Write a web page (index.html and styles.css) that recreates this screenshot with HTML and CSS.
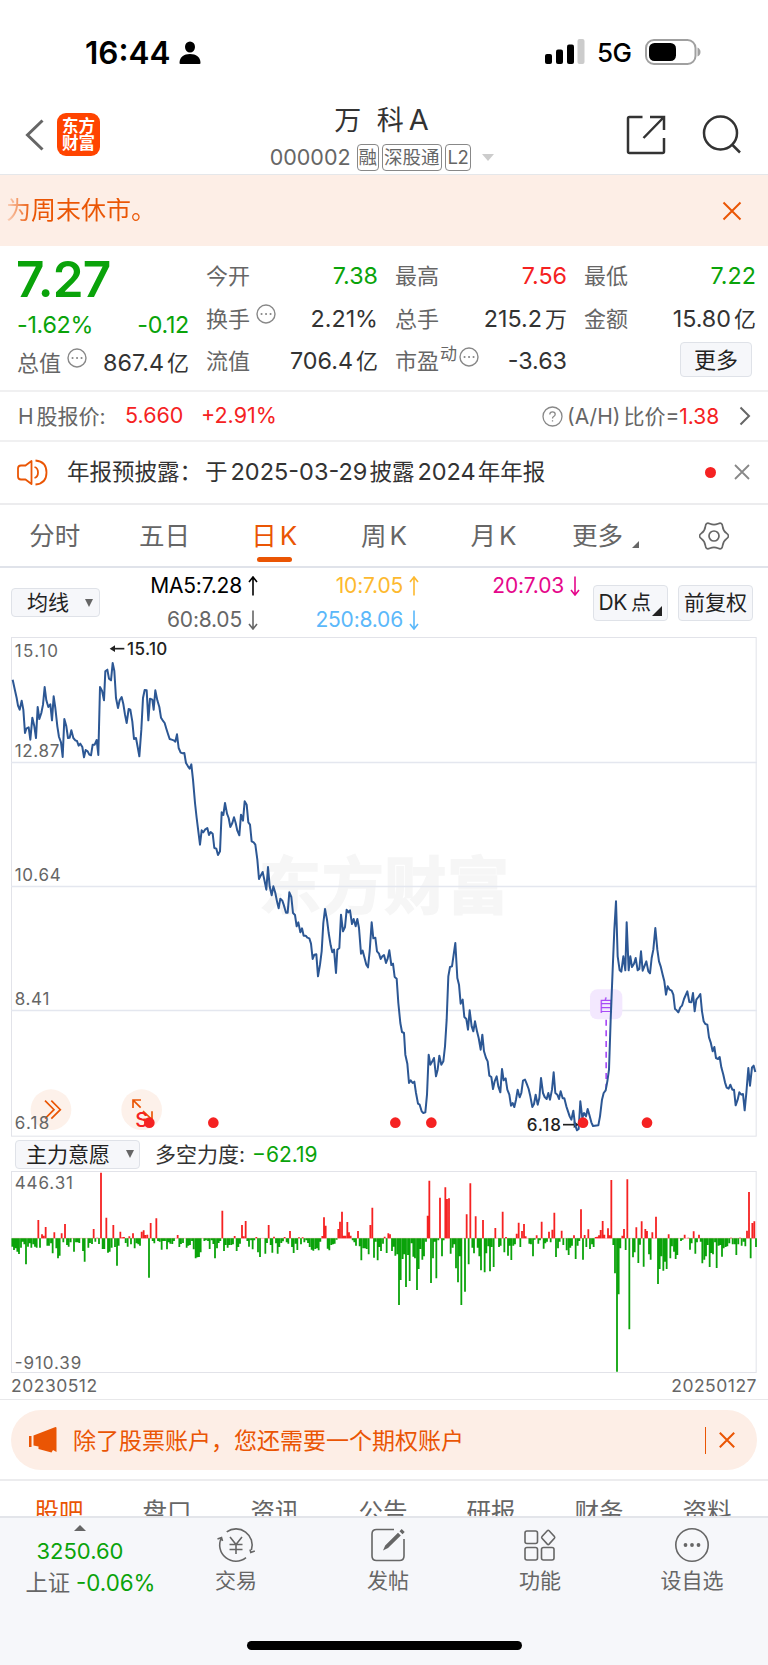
FILE: index.html
```html
<!DOCTYPE html>
<html lang="zh-CN">
<head>
  <meta charset="UTF-8" />
  <meta name="viewport" content="width=device-width, initial-scale=1.0" />
  <title>万 科A 000002</title>
  <link rel="stylesheet" href="styles.css">
</head>
<body>
  <div class="status-bar">
    <span class="time">16:44</span>
    <svg class="person" width="22" height="23" viewBox="0 0 22 23"><ellipse cx="11" cy="6" rx="5" ry="5.6"/><path d="M0.5 22c0-6 4.500-9 10.500-9s10.500 3 10.500 9q0 1-1 1h-19q-1 0-1-1z"/></svg>
    <svg class="signal" width="40" height="25" viewBox="0 0 40 25"><rect x="0" y="15" width="7" height="10" rx="2"/><rect x="11" y="10.500" width="7" height="14.500" rx="2"/><rect x="22" y="5.500" width="7" height="19.500" rx="2"/><rect x="32.500" y="0" width="7" height="25" rx="2" fill="#ccc"/></svg>
    <span class="network">5G</span>
    <svg class="battery" width="56" height="26" viewBox="0 0 56 26"><rect x="1" y="1" width="49.500" height="24" rx="8" fill="none" stroke="#a0a0a0" stroke-width="2"/><rect x="4" y="4" width="27" height="18" rx="5.500"/><path d="M52.500 8.500q3 1.500 3 4.500t-3 4.500z" fill="#a0a0a0"/></svg>
  </div>

  <div class="header">
    <svg class="back" width="20" height="32" viewBox="0 0 20 32"><path d="M17.500 1.500 2.500 16l15 14.500"/></svg>
    <div class="logo"><span>东方</span><span>财富</span></div>
    <div class="stock">
      <div class="stock-name">万 科<b>A</b></div>
      <div class="stock-code">
        <span class="code">000002</span>
        <span class="tag">融</span>
        <span class="tag">深股通</span>
        <span class="tag level">L2</span>
        <i class="caret"></i>
      </div>
    </div>
    <svg class="share" width="40" height="40" viewBox="0 0 40 40"><path d="M16.500 2H3.500q-1.500 0-1.500 1.500v33q0 1.500 1.500 1.500h33q1.500 0 1.500-1.500V23M24 2h14v13M38 2 17.500 23"/></svg>
    <svg class="search" width="40" height="40" viewBox="0 0 40 40"><circle cx="18.500" cy="18" r="16.500"/><path d="M30 29.500l8 8"/></svg>
  </div>

  <div class="banner">
    <span>为周末休市。</span>
    <svg width="20" height="20" viewBox="0 0 20 20"><path d="M1.500 1.500l17 17M18.500 1.500l-17 17"/></svg>
  </div>

  <div class="quote">
    <div class="quote-col first">
      <div class="price">7.27</div>
      <div class="cell change green"><span>-1.62%</span><span>-0.12</span></div>
      <div class="cell"><label>总值<svg class="more-dot" viewBox="0 0 20 20"><circle cx="10" cy="10" r="9"/><path d="M5.500 10h.1M10 10h.1M14.500 10h.1"/></svg></label><span>867.4<b>亿</b></span></div>
    </div>
    <div class="quote-col">
      <div class="cell"><label>今开</label><span class="green">7.38</span></div>
      <div class="cell"><label>换手<svg class="more-dot" viewBox="0 0 20 20"><circle cx="10" cy="10" r="9"/><path d="M5.500 10h.1M10 10h.1M14.500 10h.1"/></svg></label><span>2.21%</span></div>
      <div class="cell"><label>流值</label><span>706.4<b>亿</b></span></div>
    </div>
    <div class="quote-col">
      <div class="cell"><label>最高</label><span class="red">7.56</span></div>
      <div class="cell"><label>总手</label><span>215.2<b>万</b></span></div>
      <div class="cell"><label>市盈<sup>动</sup><svg class="more-dot tight" viewBox="0 0 20 20"><circle cx="10" cy="10" r="9"/><path d="M5.500 10h.1M10 10h.1M14.500 10h.1"/></svg></label><span>-3.63</span></div>
    </div>
    <div class="quote-col">
      <div class="cell"><label>最低</label><span class="green">7.22</span></div>
      <div class="cell"><label>金额</label><span>15.80<b>亿</b></span></div>
      <div class="cell end"><button class="btn more-btn">更多</button></div>
    </div>
  </div>

  <div class="h-share">
    <span class="h-label"><b>H</b>股报价:</span>
    <span class="h-price red">5.660</span>
    <span class="h-rate red">+2.91%</span>
    <svg class="help" width="21" height="21" viewBox="0 0 21 21"><circle cx="10.500" cy="10.500" r="9.500"/><path d="M7.800 8.500q0-2.700 2.700-2.700t2.700 2.500q0 1.300-1.500 2.200-1.200.7-1.200 2M10.500 14.300v1.200"/></svg>
    <span class="ratio">(A/H)<b>比价</b>=<span class="red">1.38</span></span>
    <svg class="arrow" width="12" height="20" viewBox="0 0 12 20"><path d="M1.500 1.500 10 10l-8.500 8.500"/></svg>
  </div>

  <div class="notice">
    <svg class="speaker" width="31" height="27" viewBox="0 0 31 27"><path d="M14.500 2v23l-6-4.500H4q-3 0-3-3v-8q0-3 3-3h4.500zM17.500 8q3.500 1 3.500 5.500T17.500 19M18.500 1.500q11 1 11 12t-11 12"/></svg>
    <span class="notice-text">年报预披露：<i>于</i><b>2025-03-29</b>披露<b>2024</b>年年报</span>
    <i class="dot"></i>
    <svg class="close" width="16" height="16" viewBox="0 0 16 16"><path d="M1 1l14 14M15 1 1 15"/></svg>
  </div>

  <div class="period-tabs">
    <span>分时</span>
    <span>五日</span>
    <span class="active">日<b>K</b></span>
    <span>周<b>K</b></span>
    <span>月<b>K</b></span>
    <span>更多<i class="corner"></i></span>
    <span><svg width="30" height="30" viewBox="0 0 30 30"><path d="M27.700 12.400Q24.100 9.750 23.600 5.300 23.150.9 19.100 2.700 15 4.500 10.900 2.700 6.850.9 6.400 5.300 5.900 9.750 2.300 12.400-1.300 15 2.300 17.600 5.900 20.250 6.400 24.700 6.850 29.100 10.900 27.300 15 25.500 19.100 27.300 23.150 29.100 23.600 24.700 24.100 20.250 27.700 17.600 31.300 15 27.700 12.400z"/><circle cx="15" cy="15" r="5"/></svg></span>
  </div>

  <div class="ma-row">
    <button class="btn select">均线<i></i></button>
    <div class="ma-grid">
      <span class="ma5">MA5:7.28<svg viewBox="0 0 10 20"><path d="M5 19.500V1M1 6l4-5 4 5"/></svg></span>
      <span class="ma10">10:7.05<svg viewBox="0 0 10 20"><path d="M5 19.500V1M1 6l4-5 4 5"/></svg></span>
      <span class="ma20">20:7.03<svg viewBox="0 0 10 20"><path d="M5 .5V19M1 14l4 5 4-5"/></svg></span>
      <span class="ma60">60:8.05<svg viewBox="0 0 10 20"><path d="M5 .5V19M1 14l4 5 4-5"/></svg></span>
      <span class="ma250">250:8.06<svg viewBox="0 0 10 20"><path d="M5 .5V19M1 14l4 5 4-5"/></svg></span>
    </div>
    <button class="btn dk">DK<b>点</b><i class="corner"></i></button>
    <button class="btn fq">前复权</button>
  </div>

  <!-- price chart, 3 units per pixel -->
  <svg class="chart price-chart" viewBox="0 0 2238 1500">
    <text class="watermark" x="744" y="815" textLength="750">东方财富</text>
    <rect class="frame" x="1.500" y="1.500" width="2234" height="1496"/>
    <path class="grid" d="M0 376.500H2238M0 748.500H2238M0 1120.500H2238"/>
    <g class="round-btn"><circle cx="120" cy="1418" r="61"/><path d="M102 1391l27 27-27 27M121 1391l27 27-27 27"/></g>
    <g class="round-btn"><circle cx="392" cy="1418" r="61"/><path d="M366 1413v-24h24M367 1390l22 22M396 1422l26 25M397 1447h26v-24"/></g>
    <g class="axis">
      <text x="11" y="61" textLength="130">15.10</text>
      <text x="11" y="359" textLength="134">12.87</text>
      <text x="11" y="731" textLength="138">10.64</text>
      <text x="11" y="1104" textLength="104">8.41</text>
      <text x="11" y="1476" textLength="104">6.18</text>
    </g>
    <g class="mark">
      <text x="348" y="55" textLength="121">15.10</text>
      <path d="M310 35h30" /><path class="head" d="M296 35l16-10v20z"/>
      <text x="1547" y="1481" textLength="103">6.18</text>
      <path d="M1656 1463h36"/><path class="head" d="M1704 1463l-16-10v20z"/>
    </g>
    <text class="sell" x="373" y="1470">S</text>
    <g class="self">
      <rect x="1737" y="1057" width="97" height="90" rx="22"/>
      <text x="1761" y="1121">自</text>
      <path d="M1785.500 1148v208"/>
    </g>
    <g id="priceLine"></g>
    <g class="events">
      <circle cx="415" cy="1457" r="16"/>
      <circle cx="607" cy="1457" r="16"/>
      <circle cx="1153" cy="1457" r="16"/>
      <circle cx="1261" cy="1457" r="16"/>
      <circle cx="1716" cy="1457" r="16"/>
      <circle cx="1908" cy="1457" r="16"/>
    </g>
  </svg>

  <div class="indicator">
    <button class="btn select wide">主力意愿<i></i></button>
    <span class="force">多空力度:</span>
    <span class="force-value green">−62.19</span>
  </div>

  <svg class="chart force-chart" viewBox="0 0 2238 606">
    <rect class="frame" x="1.500" y="1.500" width="2234" height="603"/>
    <path d="M3 202h2232" stroke="#f9a0a0" stroke-width="2"/>
    <g id="forceBars"></g>
    <g class="axis">
      <text x="11" y="54" textLength="175">446.31</text>
      <text x="11" y="594" textLength="200">-910.39</text>
    </g>
  </svg>
  <div class="dates"><span>20230512</span><span>20250127</span></div>

  <div class="promo">
    <div class="pill">
      <svg width="28" height="26" viewBox="0 0 28 26"><path d="M0 9h2.500v11H0zM4.500 8.500 26.500 0q1 0 1 1v24l-3.500-2-1.500 2.500L9.500 22v-2.500l-5-1z"/></svg>
      <span>除了股票账户，您还需要一个期权账户</span>
      <i class="line"></i>
      <svg class="x" width="16" height="16" viewBox="0 0 16 16"><path d="M.8.800l14.400 14.400M15.200.800.800 15.200"/></svg>
    </div>
  </div>

  <div class="info-tabs">
    <span class="active">股吧</span><span>盘口</span><span>资讯</span><span>公告</span><span>研报</span><span>财务</span><span>资料</span>
  </div>

  <div class="footer">
    <div class="nav">
      <div class="index">
        <i></i>
        <span class="green">3250.60</span>
        <span class="index-rate">上证<b class="green">-0.06%</b></span>
      </div>
      <div class="nav-item">
        <svg viewBox="0 0 40 36"><path d="M10.700 4.800A16.200 16.200 0 0 1 35.400 23M30 30.700A16.200 16.200 0 0 1 5.300 11M1.500 12 5.500 10.500l1 3.500M34 22.500l.8 3 4-1.500M14 10l6 7.500 6-7.500M20 17v10M13.500 17.500h13M13.500 22.500h13"/></svg>
        <span>交易</span>
      </div>
      <div class="nav-item">
        <svg viewBox="0 0 40 36"><path d="M26 2.500H8.500Q4 2.500 4 7v22q0 4.500 4.500 4.500h23q4.500 0 4.500-4.500V12"/><path d="M15 23.500l2.200-5L30 5.800l2.800 2.800L20 21zM31.500 4.300l2.200-2.200 3 3-2.200 2.200z" fill="#666" stroke="none"/></svg>
        <span>发帖</span>
      </div>
      <div class="nav-item">
        <svg viewBox="0 0 40 36"><rect x="5" y="4" width="12.500" height="12.500" rx="2"/><rect x="5" y="20.500" width="12.500" height="12.500" rx="2"/><rect x="21.500" y="20.500" width="12.500" height="12.500" rx="2"/><path d="M27.300 3.700q.9-.9 1.800 0l5.300 5.800q.7.900 0 1.800l-5.300 5.800q-.9.900-1.800 0L22 11.300q-.7-.9 0-1.800z"/></svg>
        <span>功能</span>
      </div>
      <div class="nav-item">
        <svg viewBox="0 0 40 36"><circle cx="20" cy="18" r="16.200"/><g fill="#666" stroke="none"><circle cx="13.500" cy="18" r="1.900"/><circle cx="20" cy="18" r="1.900"/><circle cx="26.500" cy="18" r="1.900"/></g></svg>
        <span>设自选</span>
      </div>
    </div>
    <div class="home-bar"></div>
  </div>

  <script src="chart.js"></script>
</body>
</html>
```
FILE: styles.css
```css
* {
  box-sizing: border-box;
}
body {
  margin: 0;
  width: 768px;
  height: 1665px;
  overflow: hidden;
  background: #fff;
  color: #333;
  font-family: Inter, "Noto Sans CJK SC", sans-serif;
  font-size: 22px;
  line-height: 1;
  white-space: nowrap;
}
b, i {
  font-weight: normal;
  font-style: normal;
}
svg {
  flex: none;
  display: block;
}
.green { color: #0aa30a; }
.red { color: #f52222; }
.btn {
  display: flex;
  align-items: center;
  justify-content: center;
  flex: none;
  padding: 0;
  border: 1.500px solid #dfe2e8;
  border-radius: 4px;
  background: #f6f7fa;
  color: #222;
  font-family: inherit;
  font-size: 21px;
  line-height: 1;
}

/* status bar */
.status-bar {
  height: 88px;
  display: flex;
  align-items: center;
  padding: 17px 67px 0 85px;
  color: #000;
}
.time {
  width: 94px;
  font-size: 31.500px;
  font-weight: 600;
}
.person {
  margin-right: auto;
}
.network {
  width: 48px;
  padding-left: 12px;
  font-size: 26px;
  font-weight: 500;
  letter-spacing: -0.5px;
}
.signal {
  margin-bottom: 2px;
}
.battery {
  margin-bottom: 2px;
  margin-left: 12px;
}

/* header */
.header {
  height: 87px;
  display: flex;
  align-items: center;
  padding: 0 25px;
  border-bottom: 1px solid #e5e7ea;
}
.header svg {
  fill: none;
  stroke: #333;
  stroke-width: 2.500;
}
.header .back {
  margin-top: 7px;
  stroke: #666;
  stroke-width: 3;
}
.logo {
  width: 43px;
  height: 43px;
  margin: 7px 0 0 12px;
  display: flex;
  flex-direction: column;
  align-items: center;
  justify-content: center;
  gap: 1px;
  border-radius: 9px;
  background: #ff4400;
  color: #fff;
  font-size: 16.500px;
  font-weight: bold;
}
.stock {
  width: 526px;
  display: flex;
  flex-direction: column;
  align-items: center;
  padding-left: 29px;
}
.stock-name {
  margin-top: 14px;
  padding-left: 8px;
  font-size: 27px;
  line-height: 38px;
  word-spacing: 8px;
}
.stock-name b {
  margin-left: 5px;
  font-size: 29px;
}
.stock-code {
  display: flex;
  align-items: center;
  height: 35px;
  padding-left: 9px;
  color: #666;
}
.code {
  margin-right: 6px;
  font-size: 21.500px;
}
.tag {
  height: 27px;
  padding: 0 1px;
  margin-right: 3px;
  border: 1.500px solid #888;
  border-radius: 4px;
  font-size: 18.500px;
  line-height: 24px;
}
.level {
  padding: 0 2px;
  letter-spacing: -0.5px;
}
.caret {
  margin-left: 8px;
  border: 6.500px solid transparent;
  border-top: 7px solid #ccc;
  border-bottom: 0;
}
.header .share {
  margin: 7px 36px 0 0;
}
.header .search {
  margin-top: 7px;
}

.banner {
  height: 71px;
  display: flex;
  align-items: center;
  justify-content: space-between;
  padding: 0 26px 0 6px;
  background: #fdeee6;
}
.banner span {
  font-size: 25px;
  color: transparent;
  background: linear-gradient(to right, #fbd5c0, #ea5504 26px);
  -webkit-background-clip: text;
  background-clip: text;
}
.banner svg,
.promo .x {
  fill: none;
  stroke: #ea5504;
  stroke-width: 2;
}

/* quote */
.quote {
  height: 146px;
  display: grid;
  grid-template-columns: 172px 172px 172px 172px;
  column-gap: 17px;
  padding: 8px 0 0 17px;
  border-bottom: 2px solid #f0f0f1;
}
.quote-col {
  display: grid;
  grid-template-rows: 43px 43px 42px;
}
.quote-col.first {
  grid-template-rows: 52px 37px 39px;
}
.price {
  color: #0aa30a;
  font-size: 49.500px;
  font-weight: 600;
  line-height: 50px;
  margin-left: -1px;
  letter-spacing: -0.7px;
}
.cell {
  display: flex;
  align-items: center;
  justify-content: space-between;
}
.cell.end {
  justify-content: flex-end;
}
.cell label {
  display: flex;
  align-items: center;
  color: #666;
}
.cell > span {
  font-size: 23.300px;
}
.change > span {
  letter-spacing: -0.3px;
}
.cell b {
  margin-left: 3px;
  font-size: 22px;
}
.cell sup {
  font-size: 17px;
  line-height: 17px;
  margin: -14px 0 0 1px;
}
.more-dot {
  width: 20px;
  height: 20px;
  margin: -9px 0 0 6px;
  fill: none;
  stroke: #888;
  stroke-width: 1.400;
  stroke-linecap: round;
}
.more-dot path {
  stroke-width: 2;
}
.more-dot.tight {
  margin-left: 2px;
}
.more-btn {
  width: 72px;
  height: 35px;
  margin: -3px 4px 0 0;
  font-size: 22px;
}

.h-share {
  height: 50px;
  display: flex;
  align-items: center;
  padding: 0 17px 0 18px;
  border-bottom: 2px solid #f0f0f1;
  font-size: 21px;
}
.h-label {
  width: 107px;
  color: #666;
}
.h-label b {
  margin-right: 3px;
}
.h-price {
  width: 76px;
  font-size: 21.500px;
}
.h-rate {
  margin-right: auto;
  font-size: 21.500px;
}
.help {
  margin-right: 4px;
  fill: none;
  stroke: #888;
  stroke-width: 1.300;
}
.ratio {
  width: 172px;
  color: #666;
}
.ratio b {
  margin-left: 3px;
}
.arrow {
  fill: none;
  stroke: #666;
  stroke-width: 2;
}

.notice {
  height: 63px;
  display: flex;
  align-items: center;
  padding: 0 18px 1px 17px;
  border-bottom: 2px solid #ececee;
}
.speaker {
  margin-right: 19px;
  fill: none;
  stroke: #ea5504;
  stroke-width: 1.800;
  stroke-linejoin: round;
}
.notice-text {
  margin-right: auto;
  font-size: 22.500px;
}
.notice-text i {
  margin-left: 3px;
}
.notice-text b {
  margin: 0 2px 0 3px;
  font-size: 23.500px;
}
.dot {
  width: 11px;
  height: 11px;
  margin-right: 18px;
  border-radius: 50%;
  background: #f52222;
}
.close {
  fill: none;
  stroke: #888;
  stroke-width: 1.800;
}

/* period tabs */
.period-tabs {
  height: 63px;
  display: grid;
  grid-template-columns: repeat(5, 109.700px) 114px 103px;
  border-bottom: 2px solid #e0e3ea;
  color: #666;
  font-size: 25.500px;
}
.period-tabs span {
  display: flex;
  align-items: center;
  justify-content: center;
}
.period-tabs b {
  margin-left: 3px;
  font-size: 26px;
}
.period-tabs svg {
  fill: none;
  stroke: #666;
  stroke-width: 1.700;
}
.period-tabs .active {
  position: relative;
  color: #ea5504;
}
.period-tabs .active::after {
  content: "";
  position: absolute;
  left: 38px;
  bottom: 4px;
  width: 35px;
  height: 5px;
  border-radius: 3px;
  background: #ea5504;
}
.corner {
  align-self: flex-end;
  border-left: 7px solid transparent;
  border-bottom: 7px solid #666;
}
.period-tabs .corner {
  margin: 0 0 18px 9px;
}

.ma-row {
  height: 69px;
  display: flex;
  align-items: center;
  padding: 0 0 0 11px;
}
.select {
  width: 89px;
  height: 29px;
  padding-left: 9px;
}
.select i {
  margin-left: 16px;
  border: 4.500px solid transparent;
  border-top: 8px solid #666;
  border-bottom: 0;
}
.ma-grid {
  width: 480px;
  display: grid;
  grid-template-columns: 158px 161px 161px;
  grid-template-rows: 34px 34px;
  margin-right: 13px;
  font-size: 21px;
  letter-spacing: -0.2px;
}
.ma-grid span {
  display: flex;
  align-items: center;
  justify-content: flex-end;
}
.ma-grid svg {
  width: 10px;
  height: 20px;
  margin-left: 6px;
  fill: none;
  stroke: currentColor;
  stroke-width: 1.600;
}
.ma5 { color: #000; }
.ma10 { color: #fdb92f; }
.ma20 { color: #e5078b; }
.ma60 { color: #666; }
.ma250 { color: #5bb8fa; }
.dk, .fq {
  width: 75px;
  height: 36px;
}
.dk {
  margin-right: 10px;
  letter-spacing: -0.5px;
}
.dk b {
  margin-left: 4px;
  font-size: 20px;
}
.dk .corner {
  margin: 0 0 4px 2px;
  border-left-width: 10px;
  border-bottom: 10px solid #222;
}

/* charts */
.chart {
  width: 746px;
  margin-left: 11px;
}
.price-chart { height: 500px; }
.force-chart { height: 202px; }
.frame {
  fill: none;
  stroke: #e2e3e9;
  stroke-width: 3;
}
.grid {
  stroke: #e4e7ef;
  stroke-width: 4;
}
.axis text {
  font-size: 51px;
  fill: #666;
}
.watermark {
  font-size: 186px;
  font-weight: bold;
  fill: #f6f6f6;
  stroke: #f6f6f6;
  stroke-width: 5;
}
.mark text {
  font-size: 51px;
  font-weight: 500;
  fill: #222;
}
.mark path {
  stroke: #222;
  stroke-width: 5;
}
.mark .head {
  fill: #222;
  stroke: none;
}
.round-btn circle {
  fill: #fdeee6;
  fill-opacity: .85;
}
.round-btn path {
  fill: none;
  stroke: #ea5504;
  stroke-width: 5;
}
.sell {
  font-size: 60px;
  font-weight: 500;
  fill: #f52222;
}
.self rect {
  fill: #f3e8fe;
}
.self text {
  font-size: 48px;
  fill: #a94cf6;
}
.self path {
  stroke: #a94cf6;
  stroke-width: 5;
  stroke-dasharray: 18 14;
}
.events circle {
  fill: #f52222;
}
#priceLine polyline {
  fill: none;
  stroke: #2c5794;
  stroke-width: 6;
  stroke-linejoin: round;
}

.indicator {
  height: 34px;
  display: flex;
  align-items: center;
  padding-left: 15px;
  font-size: 21px;
}
.select.wide {
  width: 125px;
  padding-left: 5px;
}
.force {
  width: 97px;
  margin-left: 15px;
}
.dates {
  height: 27px;
  display: flex;
  align-items: center;
  justify-content: space-between;
  padding: 0 11px;
  border-bottom: 1px solid #e8e8ea;
  color: #666;
  font-size: 17.500px;
  letter-spacing: 0.5px;
}

.promo {
  height: 81px;
  padding: 10px 11px 0;
  border-bottom: 2px solid #ececee;
}
.pill {
  height: 60px;
  display: flex;
  align-items: center;
  padding: 0 22px 0 18px;
  border-radius: 30px;
  background: #fdeee6;
  color: #ea5504;
  fill: #ea5504;
  font-size: 23px;
}
.pill span {
  margin: 2px auto 0 16px;
}
.pill .line {
  width: 1.500px;
  height: 27px;
  margin-right: 13px;
  background: #ea5504;
}

.info-tabs {
  height: 35px;
  display: grid;
  grid-template-columns: repeat(7, 108px);
  overflow: hidden;
  padding: 19px 0 0 5px;
  color: #666;
  font-size: 24.500px;
  text-align: center;
}
.info-tabs .active {
  color: #ea5504;
}

/* footer */
.footer {
  height: 149px;
  border-top: 2px solid #e3e5ea;
  background: #f6f7fa;
}
.nav {
  height: 123px;
  display: grid;
  grid-template-columns: 160px repeat(4, 152px);
  color: #666;
  font-size: 21px;
}
.index {
  display: flex;
  flex-direction: column;
  align-items: center;
  padding-top: 7px;
}
.index i {
  margin-bottom: 5px;
  border: 6px solid transparent;
  border-top: 0;
  border-bottom: 6px solid #666;
}
.index span {
  font-size: 22px;
  line-height: 31px;
}
.index .index-rate {
  padding-left: 21px;
  font-size: 22.300px;
}
.nav-item {
  display: flex;
  flex-direction: column;
  align-items: center;
  padding-top: 9px;
}
.nav-item svg {
  width: 40px;
  height: 36px;
  margin-bottom: 7px;
  overflow: visible;
  fill: none;
  stroke: #666;
  stroke-width: 1.600;
}
.index b {
  margin-left: 6px;
}
.home-bar {
  width: 275px;
  height: 9px;
  margin: 0 auto;
  border-radius: 5px;
  background: #000;
}
```
FILE: chart.js
```js
const SVG = "http://www.w3.org/2000/svg";

// price line pieces, each with its own origin
const pricePieces = [
  { dx: -33, dy: -22, points: "38,150 44,178 50,205 54,228 59,240 65,213 70,240 75,310 79,297 86,293 91,330 97,264 103,290 108,325 113,232 118,268 124,250 129,225 134,172 139,212 145,232 151,224 156,272 161,200 166,235 172,290 177,322 183,338 188,382 193,268 199,290 204,325 209,324 214,302 220,325 226,332 231,334 236,348 241,342 247,352 252,383 257,361 263,365 268,375 273,377 278,345 284,345 290,331 295,376 300,172 306,183 312,212 316,125 322,120 327,147 333,152 338,100 343,124 348,205 354,235 359,212 365,202 370,223 375,255 380,280 386,238 391,240 397,276 402,328 408,325 413,352 418,380 424,300 429,205 434,181 440,182 445,272 450,207 457,210 461,240 466,182 472,212 478,232 483,264 488,272 494,280 499,297 504,313 509,328 515,330 521,332 526,336 531,314 536,355 542,369 548,371 553,370 558,400 564,410 569,417 574,404 579,450 585,520 590,565 595,605 600,645 605,602 610,608 615,600 622,595 627,616 632,607 638,612 643,655 649,657 654,676 660,665 665,548 670,556 675,520 681,552 686,565 691,592 697,580 702,563 707,580 712,603 718,617 723,555 729,573 734,515 740,525 745,578 750,585" },
  { dx: 717, dy: 488, points: "0,75 5,125 11,128 16,135 22,180 27,238 32,228 38,217 43,240 49,270 54,202 59,260 65,287 70,260 76,280 81,305 86,326 91,297 97,303 102,318 108,339 113,339 118,278 124,292 129,340 135,346 140,380 145,368 151,398 156,386 161,408 167,408 172,414 178,416 183,432 188,478 193,465 199,464 204,530 210,495 215,455 220,370 225,328 231,360 236,400 242,437 247,458 252,450 258,520 262,450 268,445 273,345 279,395 285,382 290,330 295,338 300,332 306,373 311,358 317,380 322,358 327,385 333,462 338,453 343,472 349,495 354,503 359,455 365,368 370,416 376,414 381,455 387,462 392,478 397,470 402,466 408,490 413,477 418,452 424,496 429,492 434,532 440,537 445,610 451,670 456,697 462,700 466,765 472,792 477,850 482,842 488,850 493,846 498,880 504,912 509,915 515,935 520,940 526,938 531,885 536,765 541,795 547,785 552,775 558,830 563,810 568,768 574,795 580,785 585,740 590,660 595,530 600,502 606,500 611,465 616,430 622,535 627,555 632,612 638,600 643,652 649,658 654,690 659,632 665,680 670,695 675,665 681,695 686,715 692,750 697,705 702,755 708,775 713,785 718,828 724,832 729,868 734,845 740,830 745,860 751,878 756,808 761,842 767,836 772,870 778,885 783,918 788,910 793,922 798,900 803,870 809,893" },
  { dx: 1497, dy: 728, points: "29,653 34,640 39,603 45,600 50,612 56,628 61,650 67,682 72,673 77,645 83,675 88,655 93,595 99,640 104,652 110,658 115,640 120,660 126,630 131,578 136,640 142,645 147,658 152,635 158,656 163,656 169,680 174,695 179,710 184,720 190,693 195,735 201,752 206,748 211,665 217,715 222,700 228,710 233,688 238,705 244,728 249,739 265,737 270,710 276,660 281,640 287,632 292,605 297,570 302,420 308,270 313,150 318,65 323,230 329,272 334,276 340,230 346,272 350,128 356,272 361,230 366,262 372,252 377,235 383,272 388,268 393,215 398,273 404,258 409,245 415,275 420,281 425,235 430,210 436,145 442,210 447,245 452,260 458,285 463,305 468,345 473,320 479,330 485,333 490,345 495,388 500,392 505,398 511,383 516,378 522,358 532,335 538,367 544,368 549,340 554,395 559,360 565,352 571,343 576,395 581,425 586,433 592,435 597,473 602,488 608,515 613,502 618,535 624,538 629,532 634,563 640,585 645,608 650,624 656,627 661,615 667,630 672,630 677,677 683,660 688,638 694,645 699,643 704,692 709,640 715,565 720,618 726,563 731,558 736,577" }
];

// force bars as x:height, up is red and down is green
const forcePieces = [
  {
    dx: -33,
    up: "115:55 126:12 131:8 137:34 163:18 185:15 195:43 281:28 292:2 303:197 319:62 340:40 361:20 367:3 372:4 388:6 399:15 425:20 431:24 436:10 442:11 452:46 469:60 533:10 667:83 704:7 726:40 731:6 737:52 769:4 806:40 822:5 854:4 870:22 897:3 908:3 967:7 972:63 977:38 1015:28 1020:50 1026:80 1031:8 1036:8 1042:49 1047:18 1052:8 1074:22 1111:40 1117:92 1154:5 1165:15",
    down: "37:25 42:35 47:30 52:40 57:47 63:28 68:10 73:18 78:78 84:25 89:15 94:28 100:18 105:25 110:28 120:28 142:22 147:22 153:15 158:45 169:30 174:60 179:52 190:12 201:20 206:25 212:12 222:40 228:12 233:12 238:14 249:38 254:70 265:28 270:14 276:17 286:10 297:17 308:32 313:32 324:43 329:40 335:28 345:26 351:82 356:22 377:14 383:25 393:18 404:30 410:15 415:18 420:22 447:118 458:8 463:15 474:8 479:10 485:34 490:8 495:8 501:33 506:12 511:16 517:17 522:8 538:26 543:17 549:14 560:28 565:22 570:20 576:8 581:33 587:60 592:57 597:56 602:42 613:8 618:6 624:8 629:32 635:6 640:17 645:60 651:30 656:14 661:8 672:38 677:20 683:28 688:20 694:20 699:18 710:38 715:26 720:16 742:8 747:25 753:6 758:33 763:6 774:42 780:56 796:46 801:14 812:20 817:43 828:15 833:46 838:26 844:14 849:9 860:12 865:16 876:26 881:44 887:16 892:35 903:18 913:12 919:6 924:14 929:26 935:34 940:37 946:32 951:30 956:36 961:10 983:31 988:36 994:20 999:18 1004:16 1010:4 1058:6 1063:12 1068:22 1079:24 1084:66 1090:30 1095:30 1100:32 1106:48 1122:58 1127:10 1133:66 1138:26 1143:38 1149:16 1160:44"
  },
  {
    dx: 1107,
    up: "30:12 143:68 148:173 180:122 196:153 201:118 207:120 260:72 271:165 287:66 309:55 346:31 368:80 378:4 410:14 416:47 426:22 432:43 437:6 470:9 485:50 507:20 517:26 523:77 545:23 582:9 603:87 614:10 625:27 647:4 652:5 657:9 662:25 668:52 673:11 684:30 689:9 694:175 727:8 732:28 742:177 769:33 785:51 796:28 801:22 817:18 828:65 866:12 914:11 925:2 941:21 957:11 1053:2 1080:2 1101:23 1107:139 1117:46 1123:51",
    down: "36:38 41:25 46:52 52:48 57:200 62:125 68:62 73:48 78:146 84:50 89:128 95:15 100:55 105:60 111:155 116:92 121:32 127:64 132:54 138:10 153:134 159:60 164:10 169:120 175:6 186:54 191:6 212:46 218:28 223:18 228:90 234:132 239:54 244:200 255:160 266:78 277:28 282:45 293:28 298:54 303:96 314:102 319:45 325:24 330:99 335:26 341:86 357:26 362:22 373:42 384:52 389:22 394:65 400:22 405:18 421:26 448:16 453:18 459:54 464:4 475:16 480:6 491:31 496:15 501:10 512:12 528:56 534:30 539:10 550:20 560:36 566:50 571:28 576:22 587:62 593:22 598:8 609:64 619:26 630:32 636:18 641:26 700:20 705:105 711:400 716:168 721:30 737:35 748:273 759:57 764:42 775:74 780:19 791:85 807:48 812:64 834:137 839:92 844:54 850:97 855:70 860:92 871:60 876:24 882:40 887:62 892:50 903:8 908:4 930:34 935:15 946:46 951:12 962:10 967:75 973:64 978:54 983:20 989:86 994:44 999:48 1005:12 1010:89 1016:22 1021:20 1026:55 1031:30 1037:26 1042:24 1048:15 1058:18 1064:18 1069:50 1075:18 1085:22 1091:10 1096:24 1112:60 1128:26"
  }
];

function add(parent, name, attrs) {
  const el = document.createElementNS(SVG, name);
  for (const key in attrs) el.setAttribute(key, attrs[key]);
  parent.appendChild(el);
}

function drawLine() {
  const g = document.getElementById("priceLine");
  const points = pricePieces.flatMap(p => p.points.split(" ").map(s => {
    const [x, y] = s.split(",").map(Number);
    return `${x + p.dx},${y + p.dy}`;
  }));
  add(g, "polyline", { points: points.join(" ") });
}

function drawBars() {
  const g = document.getElementById("forceBars");
  const base = 202;
  for (const piece of forcePieces) {
    for (const dir of ["up", "down"]) {
      const d = piece[dir].split(" ").map(s => {
        const [x, h] = s.split(":").map(Number);
        return `M${x + piece.dx} ${base}v${dir === "up" ? -h : h}`;
      }).join("");
      add(g, "path", { d, stroke: dir === "up" ? "#f52222" : "#0aa30a", "stroke-width": 5.4 });
    }
  }
}

drawLine();
drawBars();
```
